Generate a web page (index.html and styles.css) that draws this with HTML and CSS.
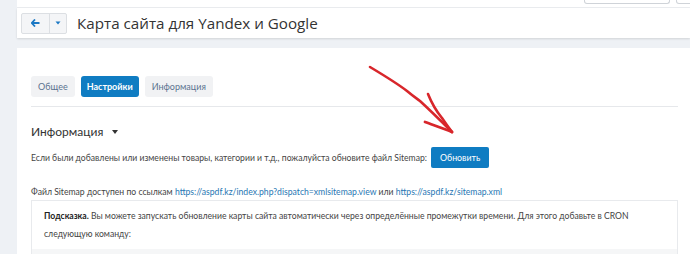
FILE: index.html
```html
<!DOCTYPE html>
<html lang="ru">
<head>
<meta charset="utf-8">
<link rel="stylesheet" href="styles.css">
</head>
<body>
<div class="page">
  <div class="sidebar"></div>
  <div class="main">
    <div class="topbar">
      <div class="tb-box tb-box1"></div>
      <div class="tb-box tb-box2"></div>
    </div>
    <div class="header">
      <div class="btn-group">
        <span class="btn-back">
          <svg width="9" height="8" viewBox="0 0 9 8"><path d="M4 0.5 L0.8 4 L4 7.5 M1 4 H8.5" fill="none" stroke="#1b78c4" stroke-width="1.8"/></svg>
        </span>
        <span class="btn-caret">
          <svg width="6" height="4" viewBox="0 0 6 4"><path d="M0.5 0.5 H5.5 L3 3.5 Z" fill="#1b78c4"/></svg>
        </span>
      </div>
      <h1 class="title">Карта сайта для Yandex и Google</h1>
    </div>
    <div class="content">
      <div class="tabs">
        <span class="tab">Общее</span>
        <span class="tab active">Настройки</span>
        <span class="tab">Информация</span>
      </div>
      <div class="section-title">Информация <span class="caret"></span></div>
      <div class="update-row">
        <span>Если были добавлены или изменены товары, категории и т.д., пожалуйста обновите файл Sitemap:</span>
        <span class="btn-primary">Обновить</span>
      </div>
      <p class="links">Файл Sitemap доступен по ссылкам <a href="#">https://aspdf.kz/index.php?dispatch=xmlsitemap.view</a> или <a href="#">https://aspdf.kz/sitemap.xml</a></p>
      <div class="hint">
        <p><b>Подсказка.</b> Вы можете запускать обновление карты сайта автоматически через определённые промежутки времени. Для этого добавьте в CRON<br>следующую команду:</p>
        <div class="code"></div>
      </div>
    </div>
  </div>
  <svg class="red-arrow" width="690" height="254" viewBox="0 0 690 254">
    <path d="M370 67 C 385 76, 398 84, 407 91 C 413 96, 416 98, 420 101 C 432 112, 443 123, 452 132" fill="none" stroke="#d8262b" stroke-width="2.6" stroke-linecap="round"/>
    <path d="M428 94 C 432 104, 437 112, 442 118 C 446 124, 449 128, 452 132" fill="none" stroke="#d8262b" stroke-width="2.6" stroke-linecap="round"/>
    <path d="M425 122 C 433 125, 442 128, 452 132" fill="none" stroke="#d8262b" stroke-width="2.8" stroke-linecap="round"/>
  </svg>
</div>
</body>
</html>
```
FILE: styles.css
```css
* { box-sizing: border-box; }
html, body { margin: 0; padding: 0; }
body {
  width: 690px;
  height: 254px;
  overflow: hidden;
  background: #eef1f5;
  font-family: "Lato", "Open Sans", sans-serif;
  color: #333;
}
.page {
  position: relative;
  display: flex;
  height: 254px;
}
.sidebar {
  width: 17px;
  flex: none;
  background: #eef1f5;
}
.main {
  flex: 1;
  display: flex;
  flex-direction: column;
}
.topbar {
  flex: none;
  height: 8px;
  background: #fff;
  border-bottom: 1px solid #ebedf0;
  display: flex;
  justify-content: flex-end;
  gap: 6px;
}
.tb-box {
  height: 4px;
  border: 1px solid #cfd3d8;
  border-top: none;
  border-radius: 0 0 3px 3px;
  background: #fff;
}
.tb-box1 { width: 86px; }
.tb-box2 { width: 20px; margin-right: -6px; }
.header {
  flex: none;
  height: 30px;
  background: #fff;
  display: flex;
  align-items: center;
  padding-left: 4px;
  box-shadow: 0 1px 2px rgba(0,0,0,0.12);
}
.btn-group {
  display: flex;
  height: 21px;
  border: 1px solid #dcdfe3;
  border-radius: 2px;
  background: #f4f5f7;
}
.btn-back {
  width: 28px;
  display: flex;
  align-items: center;
  justify-content: center;
  border-right: 1px solid #dcdfe3;
}
.btn-caret {
  width: 16px;
  display: flex;
  align-items: center;
  justify-content: center;
}
.title {
  margin: 0 0 0 10px;
  font-family: "Open Sans", sans-serif;
  font-size: 15.2px;
  font-weight: 400;
  color: #333;
  line-height: 22px;
}
.content {
  flex: 1;
  margin-top: 10px;
  background: #fff;
  padding: 28px 12px 0 14px;
  font-size: 8.65px;
}
.tabs {
  display: flex;
  gap: 6px;
  padding-bottom: 9px;
  border-bottom: 1px solid #e6e8eb;
}
.tab {
  height: 21px;
  padding: 0 7px;
  display: flex;
  align-items: center;
  background: #f1f2f4;
  border-radius: 3px;
  color: #5b7390;
  font-size: 9px;
}
.tab.active {
  background: #0f7cc2;
  color: #fff;
  font-weight: 700;
  padding: 0 6px;
}
.section-title {
  margin-top: 17px;
  font-size: 12px;
  color: #333;
  display: flex;
  align-items: center;
  gap: 9px;
}
.caret {
  width: 0;
  height: 0;
  border-left: 3.5px solid transparent;
  border-right: 3.5px solid transparent;
  border-top: 4px solid #333;
}
.update-row {
  margin-top: 8px;
  display: flex;
  align-items: center;
  gap: 4px;
  color: #444;
}
.btn-primary {
  height: 21px;
  padding: 0 9px;
  display: flex;
  align-items: center;
  background: #0f7cc2;
  color: #fff;
  border-radius: 2px;
  font-size: 8.8px;
}
.links {
  margin: 16px 0 0;
  color: #444;
  line-height: 15px;
}
.links a {
  color: #2776b3;
  text-decoration: none;
}
.hint {
  margin-top: 1px;
  border: 1px solid #e8eaed;
  border-bottom: none;
  padding: 6px 12px 0;
}
.hint p {
  margin: 0;
  line-height: 18px;
  color: #444;
}
.hint b { color: #222; }
.code {
  margin: 6px -12px 0;
  height: 12px;
  background: #f5f6f7;
}
.red-arrow {
  position: absolute;
  left: 0;
  top: 0;
  pointer-events: none;
}
```
